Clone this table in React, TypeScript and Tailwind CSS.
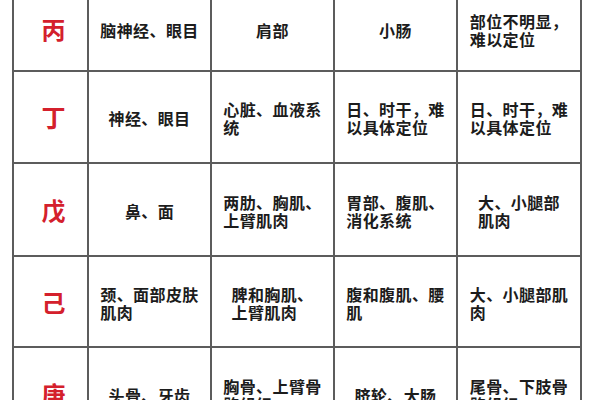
const rows: { stem: string; cells: string[][] }[] = [
  { stem: '丙', cells: [['脑神经、眼目'], ['肩部'], ['小肠'], ['部位不明显，', '难以定位']] },
  { stem: '丁', cells: [['神经、眼目'], ['心脏、血液系', '统'], ['日、时干，难', '以具体定位'], ['日、时干，难', '以具体定位']] },
  { stem: '戊', cells: [['鼻、面'], ['两肋、胸肌、', '上臂肌肉'], ['胃部、腹肌、', '消化系统'], ['大、小腿部', '肌肉']] },
  { stem: '己', cells: [['颈、面部皮肤', '肌肉'], ['脾和胸肌、', '上臂肌肉'], ['腹和腹肌、腰', '肌'], ['大、小腿部肌', '肉']] },
  { stem: '庚', cells: [['头骨、牙齿'], ['胸骨、上臂骨', '骼组织'], ['脐轮、大肠'], ['尾骨、下肢骨', '骼组织']] },
]

const rowHeights = ['h-[82px]', 'h-[90px]', 'h-[91px]', 'h-[89px]', 'h-[92px]']

export default function App() {
  return (
    <div className="h-[400px] w-[600px] overflow-hidden bg-white font-['Noto_Sans_CJK_SC',sans-serif]">
      <div className="ml-[12px] mt-[-14px] grid w-[570px] grid-cols-[73px_121px_121px_121px_122px] gap-[2px] bg-[#5c5c5c] p-[2px]">
        {rows.map((row, i) => (
          <div key={row.stem} className="contents">
            <div className={`${rowHeights[i]} flex items-center justify-center bg-white pl-[6px] text-[24px] font-semibold text-[#d4202c]`}>
              {row.stem}
            </div>
            {row.cells.map((lines, j) => (
              <div key={j} className="flex items-center justify-center bg-white pt-[2px]">
                <div className="text-left text-[16px] font-semibold leading-[18px] tracking-[0.4px] text-[#1c1c1c]">
                  {lines.map((l, k) => (
                    <div key={k}>{l}</div>
                  ))}
                </div>
              </div>
            ))}
          </div>
        ))}
      </div>
    </div>
  )
}
